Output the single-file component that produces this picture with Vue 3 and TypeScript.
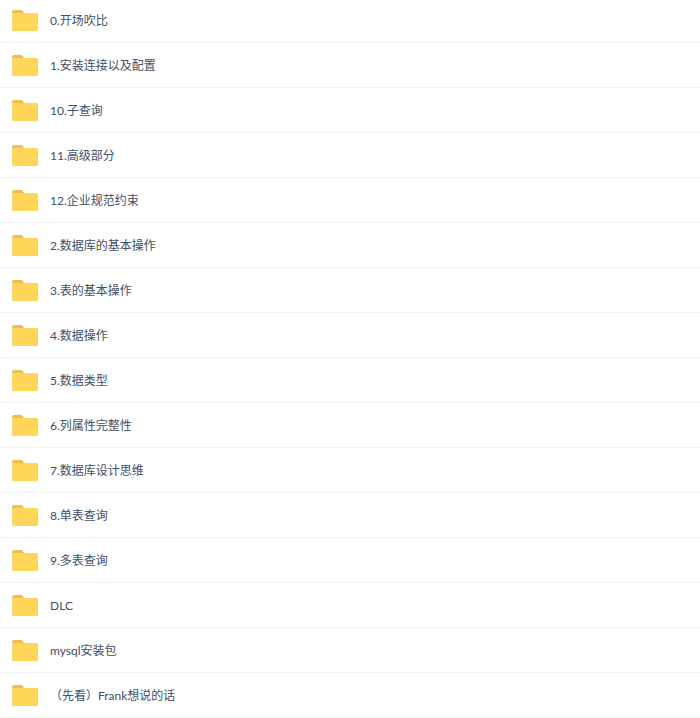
<script setup lang="ts">
const names: string[] = [
  '0.开场吹比', '1.安装连接以及配置', '10.子查询', '11.高级部分', '12.企业规范约束',
  '2.数据库的基本操作', '3.表的基本操作', '4.数据操作', '5.数据类型', '6.列属性完整性',
  '7.数据库设计思维', '8.单表查询', '9.多表查询', 'DLC', 'mysql安装包', '（先看）Frank想说的话'
]
</script>

<template>
  <ul class="list">
    <li v-for="n in names" :key="n" class="row">
      <svg class="folder" width="26" height="21" viewBox="0 0 26 21">
        <path d="M0 2a2 2 0 0 1 2-2h7a2 2 0 0 1 1.6.8L12 3H0z" fill="#eebc4f" />
        <path d="M0 4a1 1 0 0 1 1-1h24a1 1 0 0 1 1 1v16a1 1 0 0 1-1 1H1a1 1 0 0 1-1-1z" fill="#ffd659" />
      </svg>
      <span class="name">{{ n }}</span>
    </li>
  </ul>
</template>

<style>
html, body { background: #fff; overflow: hidden; }
</style>

<style scoped>
.list { margin: -2px 0 0; padding: 0; list-style: none; }
.row {
  display: flex;
  align-items: center;
  box-sizing: border-box;
  height: 45px;
  padding: 2px 0 0 12px;
  border-bottom: 1px solid #f1f4fa;
}
.folder { flex: none; align-self: flex-start; margin-top: 10px; }
.name {
  margin-left: 12px;
  font: 12px/16px Lato, "Noto Sans CJK SC", sans-serif;
  color: #424e67;
}
</style>
